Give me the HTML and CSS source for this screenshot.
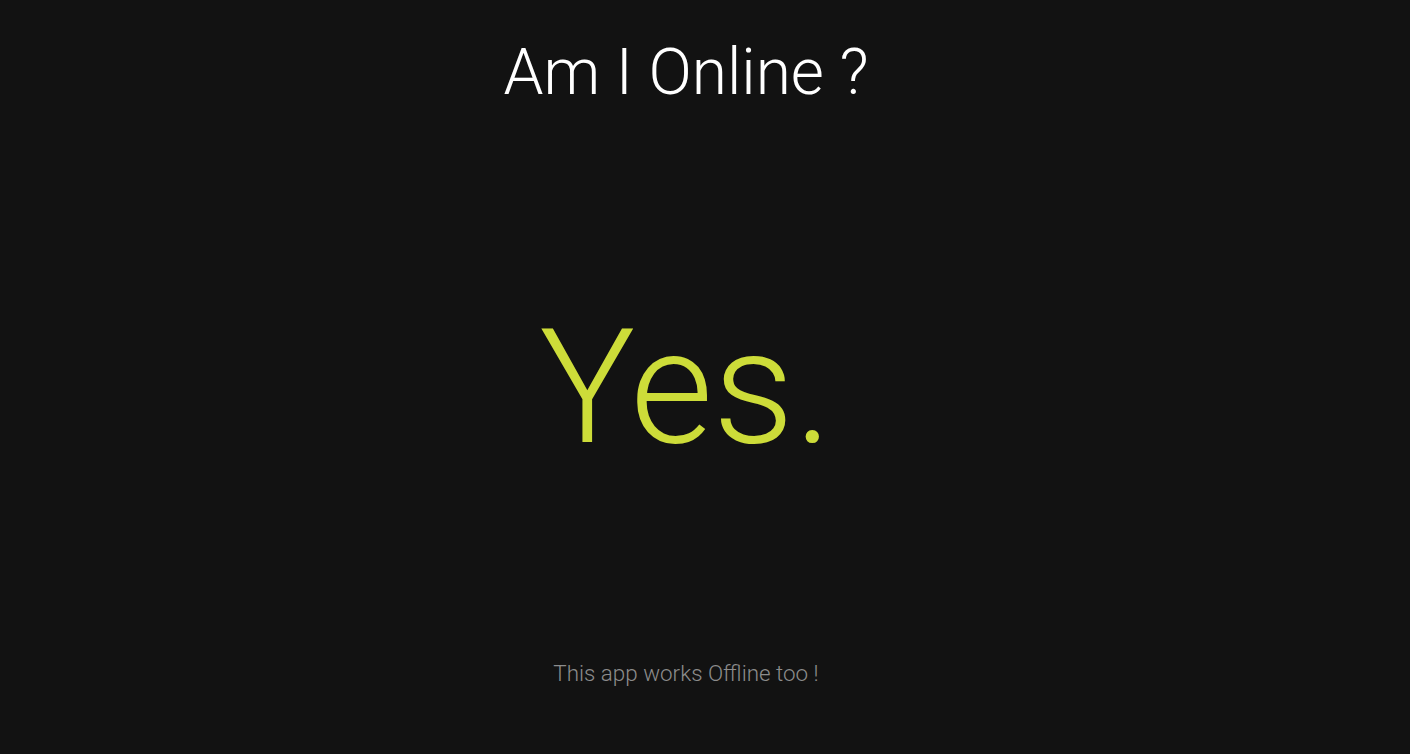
FILE: index.html
```html
<!DOCTYPE html>
<html lang="en">
<head>
<meta charset="utf-8">
<title>Am I Online ?</title>
<link rel="stylesheet" href="styles.css">
</head>
<body>
<main class="page">
  <h1 class="title">Am I Online ?</h1>
  <div class="answer">Yes.</div>
  <p class="note">This app works Offline too !</p>
</main>
</body>
</html>
```
FILE: styles.css
```css
html, body {
  margin: 0;
  padding: 0;
  background: #121212;
}
body {
  font-family: Roboto, "Liberation Sans", sans-serif;
  font-weight: 300;
}
.page {
  height: 754px;
  box-sizing: border-box;
  padding-right: 38px;
  display: flex;
  flex-direction: column;
  align-items: center;
  text-align: center;
}
.title {
  margin: 35px 0 0;
  font-size: 64px;
  font-weight: 300;
  line-height: 76px;
  color: #ffffff;
}
.answer {
  margin-top: 183px;
  font-size: 160px;
  font-weight: 300;
  line-height: 188px;
  color: #cddc39;
}
.note {
  margin: 178px 0 0;
  font-size: 22.4px;
  line-height: 26px;
  color: #8c8c8c;
}
```
